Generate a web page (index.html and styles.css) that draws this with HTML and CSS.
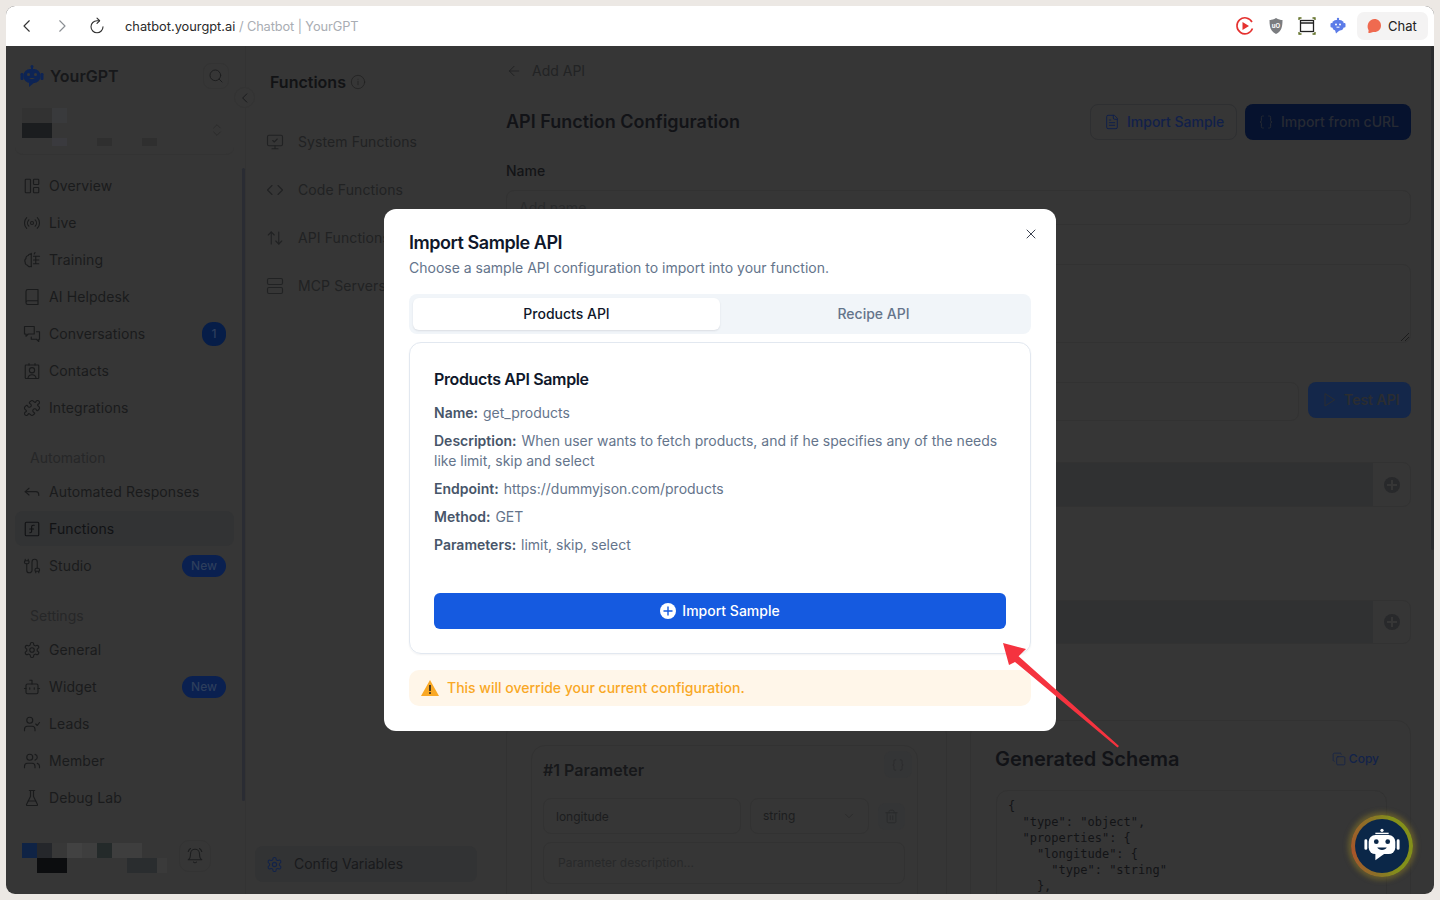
FILE: index.html
```html
<!DOCTYPE html>
<html lang="en">
<head>
<meta charset="utf-8">
<title>Chatbot | YourGPT</title>
<link rel="stylesheet" href="styles.css">
</head>
<body>
<div class="window">
  <header class="topbar">
    <div class="navs">
      <svg class="ico nav-btn" viewBox="0 0 24 24"><path d="m15 5-7 7 7 7"/></svg>
      <svg class="ico nav-btn muted" viewBox="0 0 24 24"><path d="m9 5 7 7-7 7"/></svg>
      <svg class="ico nav-btn" viewBox="0 0 24 24"><path d="M20 13a8 8 0 1 1-8-8h3"/><path d="m12 1.500 3.500 3.500-3.500 3.500"/></svg>
    </div>
    <div class="address"><span class="host">chatbot.yourgpt.ai</span> <span class="page-title">/ Chatbot | YourGPT</span></div>
    <div class="exts">
      <svg class="ext" viewBox="0 0 20 20"><path d="M17.500 12.500A8 8 0 1 1 17 6" fill="none" stroke="#e5312f" stroke-width="1.600"/><path d="M7.500 6v8l6.500-4z" fill="#e5312f"/></svg>
      <svg class="ext" viewBox="0 0 20 20"><path d="M10 2c2.500 1.500 4.500 2 6.500 2 0 7-1 11.500-6.500 14C4.500 15.500 3.500 11 3.500 4c2 0 4-.5 6.500-2z" fill="#7b7d80"/><text x="10" y="11.500" class="ublock">uO</text></svg>
      <svg class="ext" viewBox="0 0 20 20"><rect x="3.500" y="4.500" width="13" height="11" fill="none" stroke="#222" stroke-width="1.300"/><path d="M3.500 7h13" stroke="#222" stroke-width="1.300"/><path d="M2 4V2h2.500M15.500 2H18v2M2 16v2h2.500M15.500 18H18v-2" fill="none" stroke="#5b6b1f" stroke-width="1.300"/></svg>
      <svg class="ext" viewBox="0 0 20 20"><circle cx="10" cy="3" r="1.200" fill="#5b7be8"/><rect x="4" y="4" width="12" height="10.500" rx="4.500" fill="#5b7be8"/><rect x="2.500" y="7" width="2.500" height="4.500" rx="1" fill="#5b7be8"/><rect x="15" y="7" width="2.500" height="4.500" rx="1" fill="#5b7be8"/><path d="M7 14h5l-4 3.500z" fill="#5b7be8"/><circle cx="8" cy="8.500" r="1" fill="#fff"/><circle cx="12" cy="8.500" r="1" fill="#fff"/><path d="M8.500 11.200h3" stroke="#fff"/></svg>
      <div class="chat-btn">
        <svg class="bubble" viewBox="0 0 16 16"><path d="M8.500 1c3.500 0 6.500 2.500 6.500 6.500S12 14 8.500 14c-1.500 0-3 .5-5 1-1 .2-1.500-.5-1-1.500.2-.8.2-1.500-.5-2.500C.5 6.500 3.500 1 8.500 1z" fill="#ef6a50"/></svg>
        <span>Chat</span>
      </div>
    </div>
  </header>

  <div class="app">
    <aside class="sidebar">
      <div class="brand">
        <svg class="logo" viewBox="0 0 24 24"><circle cx="12" cy="2.500" r="1.500" fill="#0d2455"/><rect x="11" y="3" width="2" height="3" fill="#0d2455"/><rect x="3.500" y="5" width="17" height="14" rx="6.500" fill="#0d2455"/><rect x="0.500" y="9" width="3" height="7" rx="1.200" fill="#0d2455"/><rect x="20.500" y="9" width="3" height="7" rx="1.200" fill="#0d2455"/><path d="M9 18h6l-6 5z" fill="#0d2455"/><circle cx="8.500" cy="10.500" r="1.500" fill="#363636"/><circle cx="15.500" cy="10.500" r="1.500" fill="#363636"/><path d="M9 14c1.500 1.500 4.500 1.500 6 0z" fill="#363636"/></svg>
        <span class="brand-name">YourGPT</span>
        <div class="search-btn"><svg class="ico" viewBox="0 0 24 24"><circle cx="11" cy="11" r="8"/><path d="m21 21-4.300-4.300"/></svg></div>
      </div>
      <div class="team">
        <svg class="mosaic-team" viewBox="0 0 150 38"><rect width="30" height="15" fill="#323232"/><rect x="30" width="15" height="15" fill="#393a3c"/><rect y="15" width="30" height="15" fill="#1b1d1f"/><rect x="30" y="30" width="15" height="8" fill="#3a3a3e"/><rect x="75" y="30" width="15" height="8" fill="#2f2f2f"/><rect x="120" y="30" width="15" height="8" fill="#2f2f2f"/></svg>
        <svg class="ico updown" viewBox="0 0 24 24"><path d="m7 9 5-5 5 5"/><path d="m7 15 5 5 5-5"/></svg>
      </div>
      <nav class="nav">
        <a class="nav-item"><svg class="ico" viewBox="0 0 24 24"><rect x="3" y="3" width="7" height="18" rx="1"/><rect x="14" y="3" width="7" height="7" rx="1"/><rect x="14" y="14" width="7" height="7" rx="1"/></svg>Overview</a>
        <a class="nav-item"><svg class="ico" viewBox="0 0 24 24"><path d="M4.900 19.100C1 15.200 1 8.800 4.900 4.900"/><path d="M7.800 16.200c-2.300-2.300-2.300-6.100 0-8.500"/><circle cx="12" cy="12" r="2"/><path d="M16.200 7.800c2.300 2.300 2.300 6.100 0 8.500"/><path d="M19.100 4.900C23 8.800 23 15.100 19.100 19"/></svg>Live</a>
        <a class="nav-item"><svg class="ico" viewBox="0 0 24 24"><path d="M11 4.500a3 3 0 0 0-4 1.500 3.500 3.500 0 0 0-3 4 4 4 0 0 0-1 5 3.500 3.500 0 0 0 3 4 3.500 3.500 0 0 0 5 1.500"/><path d="M11 3v18M15 4l1-2M14 7h8M14 12h7M14 17h7M17 7v10"/></svg>Training</a>
        <a class="nav-item"><svg class="ico" viewBox="0 0 24 24"><path d="M4 19.500v-15A2.500 2.500 0 0 1 6.500 2H20v20H6.500a2.500 2.500 0 0 1 0-5H20"/></svg>AI Helpdesk</a>
        <a class="nav-item"><svg class="ico" viewBox="0 0 24 24"><path d="M2 2h13v10H7l-3 3v-3H2z"/><path d="M18 9h4v10h-1v3l-3-3h-7v-3"/></svg>Conversations<span class="badge round">1</span></a>
        <a class="nav-item"><svg class="ico" viewBox="0 0 24 24"><rect x="3" y="4" width="18" height="18" rx="1"/><path d="M8 2v2M16 2v2"/><circle cx="12" cy="11" r="3.500"/><path d="M6.500 22c.5-3.500 2.500-5 5.500-5s5 1.500 5.500 5"/></svg>Contacts</a>
        <a class="nav-item"><svg class="ico" viewBox="0 0 24 24"><path d="M19.439 7.850c-.049.322.059.648.289.878l1.568 1.568c.47.47.706 1.087.706 1.704s-.235 1.233-.706 1.704l-1.611 1.611a.98.98 0 0 1-.837.276c-.47-.07-.802-.48-.968-.925a2.501 2.501 0 1 0-3.214 3.214c.446.166.855.497.925.968a.979.979 0 0 1-.276.837l-1.610 1.610a2.404 2.404 0 0 1-1.705.707 2.402 2.402 0 0 1-1.704-.706l-1.568-1.568a1.026 1.026 0 0 0-.877-.290c-.493.074-.84.504-1.020.968a2.500 2.500 0 1 1-3.237-3.237c.464-.18.894-.527.967-1.020a1.026 1.026 0 0 0-.289-.877l-1.568-1.568A2.402 2.402 0 0 1 1.998 12c0-.617.236-1.234.706-1.704L4.230 8.770c.24-.24.581-.353.917-.303.515.077.877.528 1.073 1.010a2.500 2.500 0 1 0 3.259-3.259c-.482-.196-.933-.558-1.010-1.073-.05-.336.062-.676.303-.917l1.525-1.525A2.402 2.402 0 0 1 12 1.998c.617 0 1.234.236 1.704.706l1.568 1.568c.23.23.556.338.877.29.493-.074.84-.504 1.020-.968a2.500 2.500 0 1 1 3.237 3.237c-.464.18-.894.527-.967 1.020Z"/></svg>Integrations</a>
        <div class="nav-title">Automation</div>
        <a class="nav-item"><svg class="ico" viewBox="0 0 24 24"><path d="M8 7l-5 4.500 5 4.500"/><path d="M3 11.500h14a4 4 0 0 1 4 4v1"/></svg>Automated Responses</a>
        <a class="nav-item active"><svg class="ico" viewBox="0 0 24 24"><rect x="3" y="3" width="18" height="18" rx="1.500"/><path d="M15 7h-1.500A2 2 0 0 0 11.500 9v6a2 2 0 0 1-2 2H9"/><path d="M9 12h5"/></svg>Functions</a>
        <a class="nav-item"><svg class="ico" viewBox="0 0 24 24"><path d="M17 21v-2a1 1 0 0 1-1-1v-1a2 2 0 0 1 2-2h2a2 2 0 0 1 2 2v1a1 1 0 0 1-1 1"/><path d="M19 15V6.500a1 1 0 0 0-7 0v11a1 1 0 0 1-7 0V9"/><path d="M21 21v-2h-4"/><path d="M3 5h4V3"/><path d="M7 5a1 1 0 0 1 1 1v1a2 2 0 0 1-2 2H4a2 2 0 0 1-2-2V6a1 1 0 0 1 1-1V3"/></svg>Studio<span class="badge">New</span></a>
        <div class="nav-title">Settings</div>
        <a class="nav-item"><svg class="ico" viewBox="0 0 24 24"><path d="M12.220 2h-.44a2 2 0 0 0-2 2v.18a2 2 0 0 1-1 1.730l-.43.25a2 2 0 0 1-2 0l-.15-.08a2 2 0 0 0-2.730.73l-.22.38a2 2 0 0 0 .73 2.730l.15.1a2 2 0 0 1 1 1.720v.51a2 2 0 0 1-1 1.740l-.15.09a2 2 0 0 0-.73 2.730l.22.38a2 2 0 0 0 2.730.73l.15-.08a2 2 0 0 1 2 0l.43.25a2 2 0 0 1 1 1.730V20a2 2 0 0 0 2 2h.44a2 2 0 0 0 2-2v-.18a2 2 0 0 1 1-1.730l.43-.25a2 2 0 0 1 2 0l.15.08a2 2 0 0 0 2.730-.73l.22-.39a2 2 0 0 0-.73-2.730l-.15-.08a2 2 0 0 1-1-1.740v-.5a2 2 0 0 1 1-1.740l.15-.09a2 2 0 0 0 .73-2.730l-.22-.38a2 2 0 0 0-2.730-.73l-.15.08a2 2 0 0 1-2 0l-.43-.25a2 2 0 0 1-1-1.730V4a2 2 0 0 0-2-2z"/><circle cx="12" cy="12" r="3"/></svg>General</a>
        <a class="nav-item"><svg class="ico" viewBox="0 0 24 24"><path d="M12 8V3H9"/><rect x="4" y="8" width="16" height="13" rx="2"/><path d="M2 14h2M20 14h2M15 13v2M9 13v2"/></svg>Widget<span class="badge">New</span></a>
        <a class="nav-item"><svg class="ico" viewBox="0 0 24 24"><path d="M16 21v-2a4 4 0 0 0-4-4H6a4 4 0 0 0-4 4v2"/><circle cx="9" cy="7" r="4"/><path d="m17 12 2 2 3-4"/></svg>Leads</a>
        <a class="nav-item"><svg class="ico" viewBox="0 0 24 24"><path d="M16 21v-2a4 4 0 0 0-4-4H6a4 4 0 0 0-4 4v2"/><circle cx="9" cy="7" r="4"/><path d="M22 21v-2a4 4 0 0 0-3-3.870"/><path d="M16 3.130a4 4 0 0 1 0 7.750"/></svg>Member</a>
        <a class="nav-item"><svg class="ico" viewBox="0 0 24 24"><path d="M10 2v7.527a2 2 0 0 1-.211.896L4.720 20.550a1 1 0 0 0 .9 1.450h12.760a1 1 0 0 0 .9-1.450l-5.069-10.127A2 2 0 0 1 14 9.527V2"/><path d="M8.500 2h7"/><path d="M7 16h10"/></svg>Debug Lab</a>
      </nav>
      <div class="side-foot">
        <svg class="mosaic-user" viewBox="0 0 145 30"><rect width="15" height="15" fill="#0f2345"/><rect x="15" width="15" height="15" fill="#25272b"/><rect x="30" width="15" height="15" fill="#383838"/><rect x="45" width="15" height="15" fill="#424242"/><rect x="60" width="15" height="15" fill="#3e3e3e"/><rect x="75" width="15" height="15" fill="#242a2a"/><rect x="90" width="30" height="15" fill="#3e3e3e"/><rect x="15" y="15" width="30" height="15" fill="#0c0d0f"/><rect x="105" y="15" width="30" height="15" fill="#2a2d2f"/><rect x="135" y="15" width="10" height="15" fill="#3a3a3a"/></svg>
        <div class="bell"><svg class="ico" viewBox="0 0 24 24"><path d="M6 9a6 6 0 0 1 12 0c0 5 1 7 3 8H3c2-1 3-3 3-8z"/><path d="M10 20a2.500 2.500 0 0 0 4 0"/><path d="M3 6a7 7 0 0 1 3-4M21 6a7 7 0 0 0-3-4"/></svg></div>
      </div>
    </aside>

    <section class="panel">
      <h2 class="panel-title">Functions <svg class="ico info" viewBox="0 0 24 24"><circle cx="12" cy="12" r="10"/><path d="M12 16v-5M12 8h.01"/></svg></h2>
      <a class="panel-item"><svg class="ico" viewBox="0 0 24 24"><rect x="2" y="3" width="20" height="14" rx="2"/><path d="M12 17v4M8 21h8M9 10l2 2 4-4"/></svg>System Functions</a>
      <a class="panel-item"><svg class="ico" viewBox="0 0 24 24"><path d="m16 18 6-6-6-6"/><path d="m8 6-6 6 6 6"/></svg>Code Functions</a>
      <a class="panel-item"><svg class="ico" viewBox="0 0 24 24"><path d="m21 16-4 4-4-4"/><path d="M17 20V4"/><path d="m3 8 4-4 4 4"/><path d="M7 4v16"/></svg>API Functions</a>
      <a class="panel-item"><svg class="ico" viewBox="0 0 24 24"><rect x="2" y="2" width="20" height="8" rx="2"/><rect x="2" y="14" width="20" height="8" rx="2"/></svg>MCP Servers</a>
      <div class="config-btn"><svg class="ico" viewBox="0 0 24 24"><path d="M12.220 2h-.44a2 2 0 0 0-2 2v.18a2 2 0 0 1-1 1.730l-.43.25a2 2 0 0 1-2 0l-.15-.08a2 2 0 0 0-2.730.73l-.22.38a2 2 0 0 0 .73 2.730l.15.1a2 2 0 0 1 1 1.720v.51a2 2 0 0 1-1 1.740l-.15.09a2 2 0 0 0-.73 2.730l.22.38a2 2 0 0 0 2.730.73l.15-.08a2 2 0 0 1 2 0l.43.25a2 2 0 0 1 1 1.730V20a2 2 0 0 0 2 2h.44a2 2 0 0 0 2-2v-.18a2 2 0 0 1 1-1.730l.43-.25a2 2 0 0 1 2 0l.15.08a2 2 0 0 0 2.730-.73l.22-.39a2 2 0 0 0-.73-2.730l-.15-.08a2 2 0 0 1-1-1.740v-.5a2 2 0 0 1 1-1.740l.15-.09a2 2 0 0 0 .73-2.730l-.22-.38a2 2 0 0 0-2.730-.73l-.15.08a2 2 0 0 1-2 0l-.43-.25a2 2 0 0 1-1-1.730V4a2 2 0 0 0-2-2z"/><circle cx="12" cy="12" r="3"/></svg>Config Variables</div>
    </section>

    <main class="main">
      <div class="back"><svg class="ico" viewBox="0 0 24 24"><path d="m12 19-7-7 7-7"/><path d="M19 12H5"/></svg>Add API</div>
      <div class="head-row">
        <h1>API Function Configuration</h1>
        <div class="head-actions">
          <div class="btn outline"><svg class="ico" viewBox="0 0 24 24"><path d="M15 2H6a2 2 0 0 0-2 2v16a2 2 0 0 0 2 2h12a2 2 0 0 0 2-2V7z"/><path d="M14 2v4a2 2 0 0 0 2 2h4"/><path d="M8 13h8M8 17h8M8 9h2"/></svg>Import Sample</div>
          <div class="btn solid"><svg class="ico" viewBox="0 0 24 24"><path d="M8 3H7a2 2 0 0 0-2 2v5a2 2 0 0 1-2 2 2 2 0 0 1 2 2v5a2 2 0 0 0 2 2h1"/><path d="M16 21h1a2 2 0 0 0 2-2v-5a2 2 0 0 1 2-2 2 2 0 0 1-2-2V5a2 2 0 0 0-2-2h-1"/></svg>Import from cURL</div>
        </div>
      </div>
      <div class="field top">
        <div class="field-label">Name</div>
        <div class="input">Add name</div>
      </div>
      <div class="field">
        <div class="field-label"></div>
        <div class="textarea">
          <svg class="grip" viewBox="0 0 8 8"><path d="M0 8 8 0M4 8l4-4" stroke="#1c1c1c"/></svg>
        </div>
      </div>
      <div class="field">
        <div class="field-label"></div>
        <div class="url-row">
          <div class="input url"></div>
          <div class="test-btn"><svg class="ico" viewBox="0 0 24 24"><path d="M6 3v18l14-9z"/></svg>Test API</div>
        </div>
      </div>
      <div class="kv first"><div class="kv-body"></div><div class="kv-add"><span class="plus"></span></div></div>
      <div class="kv second"><div class="kv-body"></div><div class="kv-add"><span class="plus"></span></div></div>
      <div class="cards">
        <div class="card left-card">
          <div class="param">
            <div class="param-head">
              <h3>#1 Parameter</h3>
              <div class="json-btn"><svg class="ico" viewBox="0 0 24 24"><path d="M8 3H7a2 2 0 0 0-2 2v5a2 2 0 0 1-2 2 2 2 0 0 1 2 2v5a2 2 0 0 0 2 2h1"/><path d="M16 21h1a2 2 0 0 0 2-2v-5a2 2 0 0 1 2-2 2 2 0 0 1-2-2V5a2 2 0 0 0-2-2h-1"/></svg></div>
            </div>
            <div class="param-row">
              <div class="input small name">longitude</div>
              <div class="input small type">string<svg class="ico" viewBox="0 0 24 24"><path d="m6 9 6 6 6-6"/></svg></div>
              <div class="trash"><svg class="ico" viewBox="0 0 24 24"><path d="M3 6h18M19 6v14a2 2 0 0 1-2 2H7a2 2 0 0 1-2-2V6M8 6V4a2 2 0 0 1 2-2h4a2 2 0 0 1 2 2v2M10 11v6M14 11v6"/></svg></div>
            </div>
            <div class="input desc">Parameter description...</div>
          </div>
        </div>
        <div class="card right-card">
          <div class="schema-head">
            <h2>Generated Schema</h2>
            <div class="copy"><svg class="ico" viewBox="0 0 24 24"><rect x="8" y="8" width="14" height="14" rx="2"/><path d="M4 16c-1.100 0-2-.9-2-2V4c0-1.100.9-2 2-2h10c1.100 0 2 .9 2 2"/></svg>Copy</div>
          </div>
          <pre class="schema">{
  "type": "object",
  "properties": {
    "longitude": {
      "type": "string"
    },</pre>
        </div>
      </div>
    </main>
  </div>

  <div class="collapse"><svg class="ico" viewBox="0 0 24 24"><path d="m15 5-7 7 7 7"/></svg></div>
  <div class="thumb side-thumb"></div>
  <div class="thumb main-thumb"></div>

  <div class="widget">
    <div class="widget-face">
      <svg viewBox="0 0 40 40"><circle cx="20" cy="3.500" r="1.700" fill="#fff"/><rect x="13" y="6" width="14" height="1.500" fill="#fff"/><rect x="6" y="8.500" width="28" height="20" rx="7" fill="#fff"/><path d="M3 14.500v8M37 14.500v8" stroke="#fff" stroke-width="3" stroke-linecap="round"/><path d="M13 27h11l-11 8z" fill="#fff"/><circle cx="14" cy="15.500" r="2.500" fill="#0b2748"/><circle cx="26" cy="15.500" r="2.500" fill="#0b2748"/><path d="M15 21.500h10c-1.500 3.500-8.500 3.500-10 0z" fill="#0b2748"/></svg>
    </div>
  </div>

  <div class="modal">
    <svg class="ico close" viewBox="0 0 24 24"><path d="M18 6 6 18M6 6l12 12"/></svg>
    <h2 class="modal-title">Import Sample API</h2>
    <p class="modal-sub">Choose a sample API configuration to import into your function.</p>
    <div class="tabs">
      <div class="tab on">Products API</div>
      <div class="tab">Recipe API</div>
    </div>
    <div class="sample">
      <h3>Products API Sample</h3>
      <div class="sample-lines">
        <p><b>Name:</b> get_products</p>
        <p><b>Description:</b> When user wants to fetch products, and if he specifies any of the needs like limit, skip and select</p>
        <p><b>Endpoint:</b> https://dummyjson.com/products</p>
        <p><b>Method:</b> GET</p>
        <p><b>Parameters:</b> limit, skip, select</p>
      </div>
      <div class="import-btn"><svg class="plus-ico" viewBox="0 0 16 16"><circle cx="8" cy="8" r="8" fill="#fff"/><path d="M8 3.500v9M3.500 8h9" stroke="#155ae0" stroke-width="1.400"/></svg>Import Sample</div>
    </div>
    <div class="warning">
      <svg class="warn-ico" viewBox="0 0 18 16"><path d="M9 0 18 16H0z" fill="#f9a825"/><path d="M9 5v6" stroke="#222" stroke-width="1.600"/><circle cx="9" cy="13" r="1" fill="#222"/></svg>
      This will override your current configuration.
    </div>
  </div>

  <svg class="arrow" viewBox="0 0 130 120"><path d="M2 2 25 8 17.600 15.200 118 105 116.500 106.500 14 21 8 24z" fill="#f5333f"/></svg>
</div>
</body>
</html>
```

FILE: styles.css
```css
* { box-sizing: border-box; }
html, body { margin: 0; height: 100%; }
body {
  background: #ece8e4;
  font-family: Inter, "Noto Sans", sans-serif;
  font-size: 14px;
  line-height: 20px;
  overflow: hidden;
}
h1, h2, h3, p { margin: 0; }
.ico {
  width: 18px;
  height: 18px;
  flex: none;
  fill: none;
  stroke: currentColor;
  stroke-width: 1.5;
  stroke-linecap: round;
  stroke-linejoin: round;
}
.window {
  position: relative;
  margin: 6px;
  width: 1428px;
  height: 888px;
  border-radius: 9px;
  overflow: hidden;
  background: #363636;
  display: flex;
  flex-direction: column;
}

/* browser bar */
.topbar {
  height: 40px;
  flex: none;
  background: #fff;
  display: flex;
  align-items: center;
  padding: 0 6px 0 12px;
}
.navs { display: flex; gap: 17px; color: #333; }
.nav-btn { width: 18px; height: 18px; }
.nav-btn.muted { color: #8b8f94; }
.address { margin: 1px 0 0 19px; font-size: 12.8px; color: #a9adb3; }
.host { color: #2a2a2a; }
.page-title { letter-spacing: -.1px; }
.exts { margin-left: auto; display: flex; align-items: center; gap: 11px; }
.ext { width: 20px; height: 20px; }
.ublock { font: 700 6px Inter, sans-serif; fill: #fff; text-anchor: middle; }
.chat-btn {
  margin-left: -2px;
  width: 71px;
  height: 28px;
  background: #f4f3f3;
  border-radius: 7px;
  display: flex;
  align-items: center;
  gap: 6px;
  padding-left: 9px;
  font-size: 13px;
  color: #222;
}
.bubble { width: 16px; height: 16px; }

.app { flex: 1; display: flex; min-height: 0; }

/* sidebar */
.sidebar {
  width: 239px;
  flex: none;
  padding: 0 11px 22px 9px;
  display: flex;
  flex-direction: column;
  color: #1d1e1f;
}
.brand { height: 60px; display: flex; align-items: center; padding-left: 5px; }
.logo { width: 24px; height: 24px; margin-right: 6px; }
.brand-name { font-size: 16px; font-weight: 600; color: #17181a; }
.search-btn {
  margin-left: auto;
  margin-right: 5px;
  width: 26px;
  height: 26px;
  border: 1px solid #333;
  border-radius: 8px;
  display: flex;
  align-items: center;
  justify-content: center;
  color: #1d1e1f;
}
.search-btn .ico { width: 16px; height: 16px; }
.team {
  height: 49px;
  margin-bottom: 12px;
  padding: 2px 0 0 7px;
  border-bottom: 1px solid #333;
  border-radius: 8px;
  display: flex;
  position: relative;
}
.mosaic-team { width: 150px; height: 38px; }
.updown { position: absolute; right: 9px; top: 16px; width: 16px; height: 16px; color: #262626; stroke-width: 1; }
.nav { display: flex; flex-direction: column; }
.nav-item {
  height: 35px;
  margin: 1px 0;
  padding: 0 8px;
  border-radius: 8px;
  display: flex;
  align-items: center;
  gap: 8px;
  color: #1a1b1c;
  letter-spacing: .1px;
}
.nav-item.active { background: #323334; color: #111214; }
.nav-title { margin: 22px 0 5px 15px; height: 20px; color: #262728; }
.badge {
  margin-left: auto;
  height: 22px;
  width: 44px;
  border-radius: 11px;
  background: #0a2050;
  color: #2d3e5c;
  font-size: 12px;
  font-weight: 500;
  letter-spacing: 0;
  display: flex;
  align-items: center;
  justify-content: center;
}
.badge.round { width: 24px; height: 24px; background: #061d48; }
.side-foot { margin-top: auto; height: 32px; display: flex; align-items: center; padding-left: 7px; }
.mosaic-user { width: 145px; height: 30px; margin-top: 3px; }
.bell {
  margin-left: 12px;
  width: 32px;
  height: 32px;
  border: 1px solid #333;
  border-radius: 10px;
  display: flex;
  align-items: center;
  justify-content: center;
  color: #1d1e1f;
}

/* second panel */
.panel {
  width: 245px;
  flex: none;
  border-left: 1px solid #333;
  padding: 24px 13px 12px 20px;
  display: flex;
  flex-direction: column;
  color: #212223;
}
.panel-title {
  height: 24px;
  margin: 0 0 24px 4px;
  font-size: 16px;
  line-height: 24px;
  font-weight: 600;
  color: #121315;
  display: flex;
  align-items: center;
  gap: 4px;
}
.info { width: 16px; height: 16px; color: #222; stroke-width: 1.200; }
.panel-item { height: 48px; display: flex; align-items: center; gap: 14px; letter-spacing: .1px; }
.config-btn {
  margin: auto 0 0 -11px;
  width: 222px;
  height: 36px;
  background: #323334;
  border-radius: 8px;
  display: flex;
  align-items: center;
  gap: 11px;
  padding-left: 11px;
  color: #191a1c;
}
.config-btn .ico { color: #12234a; width: 17px; height: 17px; }

/* main */
.main {
  flex: 1;
  min-width: 0;
  padding: 15px 23px 0 16px;
  overflow: hidden;
}
.back { height: 20px; display: flex; align-items: center; gap: 10px; color: #222324; }
.back .ico { width: 16px; height: 16px; }
.head-row { margin-top: 23px; height: 36px; display: flex; align-items: center; justify-content: space-between; }
h1 { font-size: 18px; font-weight: 600; color: #121317; }
.head-actions { display: flex; gap: 8px; }
.btn {
  height: 36px;
  border-radius: 8px;
  display: flex;
  align-items: center;
  gap: 7px;
  padding: 0 13px;
  font-weight: 500;
  white-space: nowrap;
}
.btn .ico { width: 16px; height: 16px; }
.btn.outline { border: 1px solid #2e2f31; color: #11204a; width: 147px; }
.btn.solid { background: #06122e; color: #262a33; width: 166px; }
.field { margin-top: 10px; }
.field.top { margin-top: 21px; }
.field-label { height: 20px; font-weight: 500; color: #131416; margin-bottom: 9px; }
.input {
  height: 35px;
  border: 1px solid #323232;
  border-radius: 8px;
  padding: 0 12px;
  display: flex;
  align-items: center;
  color: #2a2b2c;
  overflow: hidden;
}
.textarea { height: 79px; border: 1px solid #323232; border-radius: 8px; position: relative; }
.grip { position: absolute; right: 1px; bottom: 1px; width: 8px; height: 8px; }
.url-row { display: flex; gap: 9px; align-items: flex-start; }
.url { flex: 1; height: 39px; }
.test-btn {
  width: 103px;
  height: 36px;
  border-radius: 8px;
  background: #14274a;
  color: #2b2d30;
  font-weight: 600;
  display: flex;
  align-items: center;
  gap: 7px;
  padding-left: 13px;
}
.test-btn .ico { width: 16px; height: 16px; }
.kv { display: flex; border: 1px solid #323232; border-radius: 8px; overflow: hidden; }
.kv.first { margin-top: 41px; height: 45px; }
.kv.second { margin-top: 93px; height: 44px; }
.kv-body { flex: 1; background: #303132; }
.kv-add { width: 37px; display: flex; align-items: center; justify-content: center; }
.plus {
  width: 16px;
  height: 16px;
  border-radius: 50%;
  background: #28292b;
  position: relative;
}
.plus::before, .plus::after { content: ""; position: absolute; background: #363636; }
.plus::before { left: 3px; right: 3px; top: 7px; height: 2px; }
.plus::after { top: 3px; bottom: 3px; left: 7px; width: 2px; }
.cards { margin-top: 76px; display: flex; gap: 23px; }
.card { width: 441px; height: 300px; border: 1px solid #323232; border-radius: 14px; }
.left-card { padding: 24px 28px 0 24px; }
.param { border: 1px solid #323232; border-radius: 14px; padding: 5px 12px 0 11px; height: 200px; }
.param-head { height: 47px; display: flex; justify-content: space-between; align-items: flex-start; margin-right: -7px; }
.param-head h3 { font-size: 16px; font-weight: 600; color: #17181a; line-height: 28px; margin-top: 5px; }
.json-btn {
  width: 28px;
  height: 27px;
  border-radius: 8px;
  background: #343536;
  color: #292a2b;
  display: flex;
  align-items: center;
  justify-content: center;
}
.json-btn .ico { width: 14px; height: 14px; stroke-width: 1.200; }
.param-row { display: flex; gap: 9px; align-items: center; }
.input.small { height: 36px; font-size: 12px; color: #1c1d1e; }
.input.name { width: 198px; padding-top: 2px; }
.input.type { width: 119px; justify-content: space-between; }
.input.type .ico { width: 14px; height: 14px; color: #2a2a2a; }
.trash { width: 27px; height: 27px; border-radius: 8px; background: #343536; color: #2a2b2c; display: flex; align-items: center; justify-content: center; }
.trash .ico { width: 15px; height: 15px; }
.input.desc { margin-top: 8px; height: 42px; width: 362px; padding-left: 14px; font-size: 12px; color: #28292a; }
.right-card { padding: 24px 23px 0 24px; }
.schema-head { display: flex; justify-content: space-between; align-items: center; height: 28px; padding-right: 8px; }
.schema-head h2 { font-size: 20px; font-weight: 600; color: #121317; }
.copy { display: flex; align-items: center; gap: 3px; font-size: 12px; font-weight: 500; color: #12224a; }
.copy .ico { width: 14px; height: 14px; stroke-width: 1.300; }
.schema {
  margin: 17px 0 0 1px;
  height: 200px;
  border: 1px solid #323232;
  border-radius: 12px;
  padding: 7px 11px;
  font: 12px/16px "DejaVu Sans Mono", monospace;
  color: #131416;
}

/* overlays */
.collapse {
  position: absolute;
  left: 228px;
  top: 81px;
  width: 21px;
  height: 21px;
  border: 1px solid #333;
  border-radius: 50%;
  background: #363636;
  display: flex;
  align-items: center;
  justify-content: center;
  color: #17181a;
}
.collapse .ico { width: 14px; height: 14px; }
.thumb { position: absolute; width: 3px; border-radius: 2px; }
.side-thumb { left: 236px; top: 162px; height: 633px; background: #2a2c33; }
.main-thumb { left: 1425px; top: 40px; height: 504px; background: #2a2b2d; }
.widget {
  position: absolute;
  left: 1345px;
  top: 809px;
  width: 62px;
  height: 62px;
  padding: 4px;
  border-radius: 50%;
  background: conic-gradient(from 20deg, #84901a 0 35%, #8c6f28 48%, #a8562a 66%, #8c6f28 86%, #84901a);
  box-shadow: 0 0 5px 3px rgba(130, 115, 40, .6);
}
.widget-face {
  width: 54px;
  height: 54px;
  border-radius: 50%;
  background: #0b2748;
  display: flex;
  align-items: center;
  justify-content: center;
}
.widget-face svg { width: 38px; height: 38px; }

/* modal */
.modal {
  position: absolute;
  left: 378px;
  top: 203px;
  width: 672px;
  height: 522px;
  background: #fff;
  border-radius: 12px;
  padding: 20px 25px;
  color: #0f172a;
}
.close { position: absolute; right: 17px; top: 17px; width: 16px; height: 16px; color: #3b4250; }
.modal-title { font-size: 18px; line-height: 28px; font-weight: 600; letter-spacing: -.45px; }
.modal-sub { margin-top: 1px; color: #64748b; }
.tabs {
  margin-top: 16px;
  height: 40px;
  border-radius: 8px;
  background: #f1f5f9;
  padding: 4px;
  display: flex;
}
.tab { flex: 1; display: flex; align-items: center; justify-content: center; border-radius: 6px; color: #64748b; font-weight: 500; }
.tab.on { background: #fff; color: #0f172a; box-shadow: 0 1px 2px rgba(15, 23, 42, .1); }
.sample {
  margin-top: 8px;
  height: 312px;
  border: 1px solid #e2e8f0;
  border-radius: 12px;
  padding: 24px;
  box-shadow: 0 1px 2px rgba(15, 23, 42, .05);
}
.sample h3 { font-size: 16px; line-height: 24px; font-weight: 600; letter-spacing: -.36px; }
.sample-lines { margin-top: 12px; display: flex; flex-direction: column; gap: 8px; color: #64748b; }
.sample-lines b { font-weight: 600; color: #475569; margin-right: 1px; }
.import-btn {
  margin-top: 38px;
  height: 36px;
  border-radius: 6px;
  background: #155ae0;
  color: #fff;
  font-weight: 500;
  display: flex;
  align-items: center;
  justify-content: center;
  gap: 6px;
}
.plus-ico { width: 16px; height: 16px; }
.warning {
  margin-top: 16px;
  height: 36px;
  border-radius: 10px;
  background: #fff6e9;
  color: #f9a825;
  font-weight: 500;
  display: flex;
  align-items: center;
  gap: 8px;
  padding-left: 12px;
}
.warn-ico { width: 18px; height: 16px; }
.arrow { position: absolute; left: 995px; top: 635px; width: 130px; height: 120px; }
```
